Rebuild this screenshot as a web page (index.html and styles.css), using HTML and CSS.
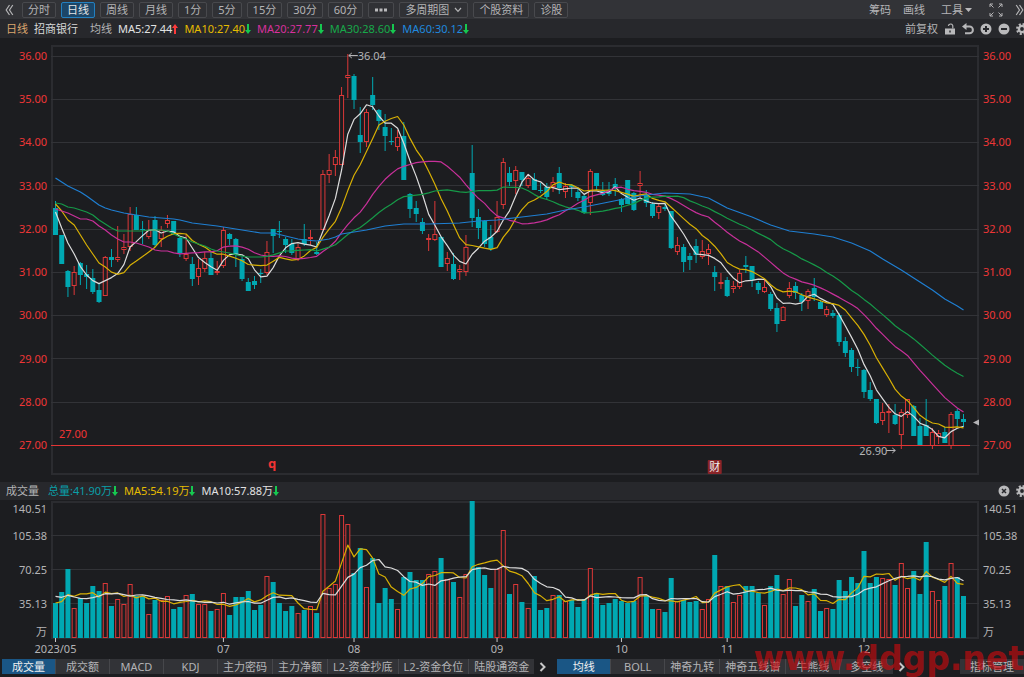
FILE: index.html
```html
<!DOCTYPE html>
<html lang="zh-CN">
<head>
<meta charset="UTF-8">
<meta name="viewport" content="width=device-width, initial-scale=1.0">
<title>招商银行 日线</title>
<link rel="stylesheet" href="styles.css">
</head>
<body>
    <div class="topbar">
        <button class="icon-btn" aria-label="收起"><svg width="9" height="12" viewBox="0 0 9 12"><path d="M4.5 1L1.2 6l3.300 5M7.800 1L4.500 6l3.300 5"/></svg></button>
        <div class="periods">
            <button>分时</button>
            <button class="active">日线</button>
            <button>周线</button>
            <button>月线</button>
            <button>1分</button>
            <button>5分</button>
            <button>15分</button>
            <button>30分</button>
            <button>60分</button>
            <button aria-label="更多"><svg width="14" height="4" viewBox="0 0 14 4"><path class="solid" d="M1 .5h3v3H1zM5.500 .5h3v3h-3zM10 .5h3v3h-3z"/></svg></button>
            <button>多周期图<svg class="chevron" width="8" height="6" viewBox="0 0 8 6"><path d="M1 1l3 3.400L7 1"/></svg></button>
            <button>个股资料</button>
            <button>诊股</button>
        </div>
        <div class="tools">
            <button>筹码</button>
            <button>画线</button>
            <button class="tool-menu">工具<svg width="7" height="4" viewBox="0 0 7 4"><path class="solid" d="M0 0h7L3.500 4z"/></svg></button>
            <button class="full" aria-label="全屏"><svg width="14" height="14" viewBox="0 0 14 14"><path d="M1 4V1h3M1 1l3.500 3.500M10 1h3v3M13 1L9.500 4.500M1 10v3h3M1 13l3.500-3.500M10 13h3v-3M13 13L9.500 9.500"/></svg></button>
            <button aria-label="展开"><svg width="9" height="12" viewBox="0 0 9 12"><path d="M1.200 1l3.300 5-3.300 5M4.500 1l3.300 5-3.300 5"/></svg></button>
        </div>
    </div>

    <div class="infobar">
        <span class="period">日线</span>
        <span class="stock">招商银行</span>
        <span class="group">均线</span>
        <span class="c-white">MA5:27.44<svg class="arrow up" width="6" height="10" viewBox="0 0 6 10"><path d="M3 0l3 4H4v6H2V4H0z"/></svg></span>
        <span class="c-yellow">MA10:27.40<svg class="arrow down" width="6" height="10" viewBox="0 0 6 10"><path d="M3 10L0 6h2V0h2v6h2z"/></svg></span>
        <span class="c-pink">MA20:27.77<svg class="arrow down" width="6" height="10" viewBox="0 0 6 10"><path d="M3 10L0 6h2V0h2v6h2z"/></svg></span>
        <span class="c-green">MA30:28.60<svg class="arrow down" width="6" height="10" viewBox="0 0 6 10"><path d="M3 10L0 6h2V0h2v6h2z"/></svg></span>
        <span class="c-blue">MA60:30.12<svg class="arrow down" width="6" height="10" viewBox="0 0 6 10"><path d="M3 10L0 6h2V0h2v6h2z"/></svg></span>
        <div class="info-tools">
            <button>前复权</button>
            <button aria-label="锁定"><svg width="12" height="12" viewBox="0 0 12 12"><path class="solid" fill-rule="evenodd" d="M1 5.500h10V11.500H1zM5.300 7.500v2h1.400v-2z"/><path d="M8.800 5.500V3.500a2.200 2.200 0 0 0-4.400-.6"/></svg></button>
            <button aria-label="撤销"><svg width="12" height="12" viewBox="0 0 12 12"><path class="thick" d="M2 3.500h5.500a3.300 3.300 0 0 1 0 6.800H3"/><path class="solid" d="M0 3.500L4.500 0v7z"/></svg></button>
            <button aria-label="放大"><svg width="12" height="12" viewBox="0 0 12 12"><circle class="solid" cx="6" cy="6" r="5.500"/><path class="cut" d="M6 3v6M3 6h6"/></svg></button>
            <button aria-label="缩小"><svg width="12" height="12" viewBox="0 0 12 12"><circle class="solid" cx="6" cy="6" r="5.500"/><path class="cut" d="M3 6h6"/></svg></button>
            <button aria-label="设置"><svg width="12" height="12" viewBox="0 0 12 12"><circle class="teeth" cx="6" cy="6" r="4.800"/><circle class="ring" cx="6" cy="6" r="3.100"/></svg></button>
        </div>
    </div>

    <div class="panel">
        <div class="axis price-axis left">
            <span>36.00</span><span>35.00</span><span>34.00</span><span>33.00</span><span>32.00</span>
            <span>31.00</span><span>30.00</span><span>29.00</span><span>28.00</span><span>27.00</span>
        </div>
        <svg id="priceChart" class="chart price-chart"></svg>
        <div class="axis price-axis">
            <span>36.00</span><span>35.00</span><span>34.00</span><span>33.00</span><span>32.00</span>
            <span>31.00</span><span>30.00</span><span>29.00</span><span>28.00</span><span>27.00</span>
        </div>
    </div>

    <div class="infobar volume-bar">
        <span class="group">成交量</span>
        <span class="c-teal">总量:41.90万<svg class="arrow down" width="6" height="10" viewBox="0 0 6 10"><path d="M3 10L0 6h2V0h2v6h2z"/></svg></span>
        <span class="c-yellow">MA5:54.19万<svg class="arrow down" width="6" height="10" viewBox="0 0 6 10"><path d="M3 10L0 6h2V0h2v6h2z"/></svg></span>
        <span class="c-white">MA10:57.88万<svg class="arrow down" width="6" height="10" viewBox="0 0 6 10"><path d="M3 10L0 6h2V0h2v6h2z"/></svg></span>
        <div class="info-tools">
            <button aria-label="关闭"><svg width="12" height="12" viewBox="0 0 12 12"><circle class="solid" cx="6" cy="6" r="5.500"/><path class="cut thin" d="M4 4l4 4M8 4L4 8"/></svg></button>
            <button aria-label="设置"><svg width="12" height="12" viewBox="0 0 12 12"><circle class="teeth" cx="6" cy="6" r="4.800"/><circle class="ring" cx="6" cy="6" r="3.100"/></svg></button>
        </div>
    </div>

    <div class="panel">
        <div class="axis volume-axis left">
            <span>140.51</span><span>105.38</span><span>70.25</span><span>35.13</span><span>万</span>
        </div>
        <svg id="volumeChart" class="chart volume-chart"></svg>
        <div class="axis volume-axis">
            <span>140.51</span><span>105.38</span><span>70.25</span><span>35.13</span><span>万</span>
        </div>
    </div>

    <div class="bottombar">
        <div class="tabs">
            <button class="active">成交量</button>
            <button>成交额</button>
            <button>MACD</button>
            <button>KDJ</button>
            <button>主力密码</button>
            <button>主力净额</button>
            <button>L2-资金抄底</button>
            <button>L2-资金仓位</button>
            <button>陆股通资金</button>
        </div>
        <button class="next" aria-label="更多指标"><svg width="7" height="10" viewBox="0 0 7 10"><path d="M1.500 1L5.500 5l-4 4"/></svg></button>
        <div class="tabs">
            <button class="active">均线</button>
            <button>BOLL</button>
            <button>神奇九转</button>
            <button>神奇五线谱</button>
            <button>牛熊线</button>
            <button>多空线</button>
        </div>
        <button class="next" aria-label="更多均线"><svg width="7" height="10" viewBox="0 0 7 10"><path d="M1.500 1L5.500 5l-4 4"/></svg></button>
        <button class="manage">指标管理</button>
    </div>
    <div class="watermark">www.ddgp.net</div>

    <script src="chart.js"></script>
</body>
</html>
```
FILE: styles.css
```css
body {
    margin: 0;
    background-color: #1c1d20;
    color: #b4b4b6;
    font-family: "Noto Sans", "Noto Sans CJK SC", sans-serif;
    font-size: 11px;
    line-height: 16px;
    position: relative;
    overflow: hidden;
}
button {
    background: none;
    border: none;
    margin: 0;
    padding: 0;
    color: inherit;
    font: inherit;
    cursor: pointer;
    white-space: nowrap;
}
svg {
    display: block;
}
button svg path {
    fill: none;
    stroke: #b4b4b6;
    stroke-width: 1.2;
}
button svg .solid {
    fill: #b9b9bb;
    stroke: none;
}
button svg .thick {
    stroke-width: 2;
}
button svg .cut {
    stroke: #27282c;
    stroke-width: 2;
}
button svg .thin {
    stroke-width: 1.5;
}
button svg .teeth {
    fill: none;
    stroke: #b9b9bb;
    stroke-width: 2.4;
    stroke-dasharray: 2 1.77;
}
button svg .ring {
    fill: none;
    stroke: #b9b9bb;
    stroke-width: 2.4;
}

/* top toolbar */
.topbar {
    display: flex;
    align-items: center;
    height: 19px;
    background-color: #323337;
}
.icon-btn {
    margin: 0 8px 0 5px;
}
.periods {
    display: flex;
    gap: 5px;
}
.periods button {
    display: flex;
    align-items: center;
    box-sizing: border-box;
    height: 16px;
    padding: 0 5px;
    line-height: 14px;
    border: 1px solid #48494d;
    border-radius: 2px;
    background-color: #303135;
}
.periods .active {
    background-color: #1c4668;
    border-color: #2380c0;
    color: #e4e4e4;
}
.chevron {
    margin: 0 0 0 5px;
}
.tools {
    display: flex;
    align-items: center;
    gap: 12px;
    margin-left: auto;
}
.tool-menu {
    display: flex;
    align-items: center;
    gap: 2px;
    margin-left: 4px;
}
.full {
    margin-left: 5px;
}
.full svg path {
    stroke-width: 1;
}

/* indicator values */
.infobar {
    display: flex;
    align-items: center;
    gap: 6px;
    height: 19px;
    padding-left: 6px;
    background-color: #27282c;
}
.infobar span {
    display: flex;
    align-items: center;
    white-space: nowrap;
}
.period {
    color: #dba66e;
}
.stock {
    margin-right: 6px;
    color: #d8d8d8;
}
.c-white {
    color: #e2e2e2;
}
.c-yellow {
    color: #e6bc00;
}
.c-pink {
    color: #d8309c;
}
.c-green {
    color: #17a84a;
}
.c-blue {
    color: #2088de;
}
.c-teal {
    color: #0a9fa8;
}
.arrow.up {
    fill: #ff3b3b;
}
.arrow.down {
    fill: #16c850;
}
.info-tools {
    display: flex;
    align-items: center;
    gap: 6px;
    margin-left: auto;
    margin-right: -4px;
}
.volume-bar {
    height: 18px;
}
.volume-bar .group {
    margin-right: 3px;
}

/* charts */
.panel {
    display: flex;
}
.axis {
    box-sizing: border-box;
    width: 45px;
    padding-left: 4px;
}
.axis.left {
    width: 51px;
    padding: 0 4px 0 0;
    text-align: right;
}
.price-axis {
    display: flex;
    flex-direction: column;
    justify-content: space-between;
    height: 405px;
    margin-top: 10px;
    color: #ee3636;
}
.volume-axis {
    display: grid;
    grid-template-rows: 17px 27px 34px 34px 28px;
    align-items: end;
    align-content: start;
}
.chart {
    flex: 1;
    min-width: 0;
    overflow: visible;
}
.price-chart {
    height: 444px;
}
.volume-chart {
    height: 157px;
}
.frame {
    fill: none;
    stroke: #2b2c30;
    stroke-width: 2;
}
.grid {
    stroke: #323337;
}
.bar-up {
    fill: #1c1d20;
    stroke: #dc3838;
}
.bar-down {
    fill: #00a8b2;
}
.wick-up {
    stroke: #dc3838;
}
.wick-down {
    stroke: #00a8b2;
}
.line {
    fill: none;
    stroke-width: 1.2;
    stroke-linejoin: round;
}
.line.white {
    stroke: #dcdcdc;
}
.line.yellow {
    stroke: #d8b004;
}
.line.pink {
    stroke: #c8309a;
}
.line.green {
    stroke: #169a48;
}
.line.blue {
    stroke: #1f7fd2;
}
.support {
    stroke: #e23434;
}
.tick {
    stroke: #c8c8c8;
}
.label {
    fill: #b4b4b6;
}
.label.red {
    fill: #f03434;
}
.label.middle {
    text-anchor: middle;
}
.label.bold {
    font-size: 13px;
    font-weight: bold;
}
.badge {
    fill: #8a2428;
}
.badge-text {
    fill: #f0f0f0;
    font-size: 11px;
    text-anchor: middle;
}
.pointer {
    fill: #b4b4b6;
}
.pointer-line {
    fill: none;
    stroke: #b4b4b6;
}

/* bottom tabs */
.bottombar {
    display: flex;
    align-items: center;
    height: 19px;
    padding: 0 0 1px 2px;
}
.tabs {
    display: flex;
    gap: 1px;
    background-color: #46474b;
}
.tabs button,
.manage {
    box-sizing: border-box;
    min-width: 53px;
    height: 15px;
    padding: 0 5px;
    line-height: 15px;
    background-color: #323337;
}
.tabs .active {
    background-color: #1a5685;
    color: #f0f0f0;
}
.next {
    margin: 0 11px 0 5px;
}
.next svg path {
    stroke: #c8c8c8;
    stroke-width: 2;
}
.manage {
    margin-left: auto;
    padding: 0 10px;
}
.watermark {
    position: absolute;
    right: 0;
    bottom: -1px;
    color: rgba(205, 10, 14, 0.65);
    font: bold 33px/38px "DejaVu Sans", sans-serif;
    pointer-events: none;
}
```
FILE: chart.js
```js
// up(1)/down(0), high, body top, body bottom, low, volume
const candles = [
    [0,201,208,235,235,105],[0,235,235,264,264,139],[0,270,271,287,297,208],[1,266,272,286,295,90],[0,262,263,275,285,120],
    [0,265,274,277,289,105],[0,269,278,292,294,157],[0,284,290,302,303,142],[1,256,257,296,296,165],[0,249,257,260,267,96],
    [1,226,257,260,262,117],[1,234,247,250,254,102],[1,207,214,247,251,162],[0,207,215,230,230,125],[0,221,229,230,244,125],
    [1,220,230,237,239,72],[0,216,220,245,247,115],[1,226,230,239,247,113],[1,215,220,224,228,127],[0,221,221,234,235,86],
    [0,237,238,253,257,93],[1,234,254,259,261,128],[0,257,264,279,286,131],[1,259,268,277,285,103],[1,252,258,269,272,101],
    [0,252,258,275,275,81],[1,261,271,273,275,87],[1,227,230,266,268,135],[0,233,234,239,245,70],[0,238,239,255,267,123],
    [0,257,259,279,281,123],[0,278,282,291,291,142],[0,276,281,285,289,83],[0,269,273,274,283,100],[1,241,252,273,275,186],
    [0,229,229,236,253,168],[0,221,231,232,238,105],[0,237,239,245,253,81],[0,239,244,253,255,96],[1,244,247,259,261,75],
    [0,224,239,244,246,83],[1,230,237,238,245,96],[0,242,252,254,255,75],[1,170,174,230,230,372],[1,154,170,175,183,150],
    [1,150,157,165,176,162],[1,87,95,165,165,368],[1,54,75,78,98,342],[0,74,76,100,109,195],[0,107,135,142,153,269],
    [1,109,112,142,147,152],[0,77,95,105,110,240],[0,109,110,121,130,104],[0,114,127,136,151,150],[0,128,141,142,145,117],
    [1,130,137,147,151,87],[0,122,136,180,180,183],[0,193,194,209,218,198],[0,201,208,214,222,174],[0,218,222,231,234,174],
    [1,234,238,239,251,192],[1,201,234,240,241,200],[0,236,237,267,267,240],[1,252,258,264,271,177],[0,253,264,279,280,168],
    [1,265,269,272,280,123],[1,235,247,272,276,192],[0,145,173,218,227,410],[0,209,217,228,239,212],[0,220,221,244,247,189],
    [0,225,237,249,251,150],[1,201,217,232,233,207],[1,158,162,205,209,324],[0,167,173,182,186,133],[1,166,170,181,194,162],
    [0,172,172,180,186,108],[1,174,178,186,188,90],[0,173,179,190,190,186],[0,183,190,191,193,85],[0,183,187,197,200,91],
    [1,177,182,187,192,129],[0,167,173,188,194,129],[1,183,186,192,198,110],[0,184,185,187,197,113],[0,187,192,198,201,94],
    [0,195,196,213,214,117],[1,169,171,203,215,210],[0,173,173,186,190,135],[0,182,191,195,196,98],[0,182,190,194,196,106],
    [0,178,184,188,196,118],[0,198,199,205,212,110],[0,180,180,204,204,105],[0,192,193,210,211,111],[1,171,183,186,198,183],
    [0,190,195,203,207,125],[0,202,204,216,218,88],[1,203,206,213,219,87],[0,203,207,209,211,78],[0,211,211,248,249,179],
    [1,237,245,252,255,110],[0,244,247,262,272,113],[0,253,256,260,270,109],[0,239,246,255,263,112],[1,240,251,257,259,87],
    [1,244,249,254,265,117],[0,266,272,277,291,249],[1,273,282,284,289,156],[0,277,280,296,297,157],[1,281,286,289,293,108],
    [1,270,273,287,289,129],[0,256,265,267,273,155],[0,266,266,280,287,155],[0,281,283,290,294,135],[1,280,287,292,293,98],
    [0,292,294,309,311,155],[0,303,308,324,332,189],[1,306,307,321,321,132],[1,282,288,296,298,178],[0,282,286,293,299,96],
    [0,293,295,302,311,130],[1,289,291,301,309,111],[0,278,288,297,301,147],[0,300,302,309,309,82],[1,306,309,315,317,90],
    [0,310,313,316,318,88],[0,313,315,342,346,174],[0,337,341,353,357,141],[0,348,350,367,372,184],[0,359,367,368,376,165],
    [0,369,370,392,398,262],[0,382,390,399,401,165],[0,399,399,423,424,184],[1,403,412,421,425,180],[1,404,411,412,433,177],
    [0,404,415,424,425,159],[1,409,412,435,449,224],[1,399,399,415,418,150],[0,405,406,436,436,201],[0,418,426,445,445,133],
    [0,399,425,436,436,289],[1,428,432,446,449,141],[1,430,433,437,444,114],[0,427,432,443,443,157],[1,412,414,446,449,224],
    [0,409,411,419,427,183],[0,414,419,422,427,126]
];

// averages that reach back before the first candle
const ma5Start = [212,228,243,254];
const ma10Start = [204,211,220,225,235,245,254,263,267];
const ma20Start = [209,211,213,216,219,219,221,226,230,235,239,242,242,243,245,247,250,251,251];
const ma30Start = [203,204,207,208,210,212,215,220,224,228,231,231,231,231,231,230,230,230,231,234,237,239,242,244,246,249,251,252,253];
const ma60 = [
    [0,178],[2,186],[4,192],[5,196],[7,205],[8,208],[9,210],[11,213],[12,214],[15,217],[17,218],[19,219],[20,220],[22,223],
    [26,226],[28,228],[31,231],[33,233],[35,233],[37,236],[39,239],[40,240],[42,241],[43,240],[44,239],[45,237],[46,234],
    [48,232],[50,230],[53,226],[56,224],[60,224],[65,223],[68,221],[71,220],[75,217],[79,214],[82,210],[85,207],[89,202],
    [93,197],[95,195],[98,193],[102,194],[105,198],[108,208],[112,217],[115,225],[118,231],[122,234],[125,237],[128,243],
    [131,251],[133,259],[136,270],[138,278],[141,290],[143,299],[145,306],[146,310]
];
const vol5Start = [105,109,130,125];
const vol10Start = [125,122,128,123,119,118,121,126,133];
const months = [[0,'2023/05'],[27,'07'],[48,'08'],[71,'09'],[91,'10'],[108,'11'],[130,'12']];

function average(values, size, start) {
    return values.map((value, i) => {
        if (i < size - 1) return [i, start[i]];
        let sum = 0;
        for (let k = i - size + 1; k <= i; k++) sum += values[k];
        return [i, sum / size];
    });
}

function draw() {
    const priceChart = document.getElementById('priceChart');
    const volumeChart = document.getElementById('volumeChart');
    const width = priceChart.getBoundingClientRect().width;
    const step = (width - 20) / (candles.length - 1);
    const x = i => 4.5 + i * step;
    const volY = v => 638 - v / 3;
    const line = (points, color, y = v => v) =>
        `<polyline class="line ${color}" points="${points.map(p => x(p[0]).toFixed(1) + ',' + y(p[1]).toFixed(1)).join(' ')}"/>`;

    // price
    let out = `<rect class="frame" x="1" y="46" width="${width - 2}" height="428"/>`;
    for (let i = 0; i < 10; i++) {
        const y = Math.floor(56 + i * 43.25) + 0.5;
        out += `<line class="grid" x1="0" x2="${width}" y1="${y}" y2="${y}"/>`;
    }
    candles.forEach(([up, high, top, bottom, low], i) => {
        const type = up ? 'up' : 'down';
        const cx = x(i);
        out += `<line class="wick-${type}" x1="${cx}" x2="${cx}" y1="${high}" y2="${low}"/>`;
        out += up
            ? `<rect class="bar-up" x="${cx - 2}" y="${top + 0.5}" width="4" height="${Math.max(bottom - top - 1, 1)}"/>`
            : `<rect class="bar-down" x="${cx - 2.5}" y="${top}" width="5" height="${bottom - top}"/>`;
    });
    const closes = candles.map(c => c[0] ? c[2] : c[3]);
    out += line(average(closes, 5, ma5Start), 'white');
    out += line(average(closes, 10, ma10Start), 'yellow');
    out += line(average(closes, 20, ma20Start), 'pink');
    out += line(average(closes, 30, ma30Start), 'green');
    out += line(ma60, 'blue');
    out += `<line class="support" x1="0" x2="${width - 9}" y1="445.5" y2="445.5"/>`;
    out += `<text class="label red" x="8" y="438">27.00</text>`;

    const peak = x(47);
    out += `<path class="pointer-line" d="M${peak + 1} 55.5h9M${peak + 4} 53l-3 2.500l3 2.500"/>`;
    out += `<text class="label" x="${peak + 10}" y="60">36.04</text>`;
    const bottom = x(136);
    out += `<path class="pointer-line" d="M${bottom - 15} 450.500h9M${bottom - 9} 448l3 2.500l-3 2.500"/>`;
    out += `<text class="label" x="${bottom - 42}" y="455">26.90</text>`;
    out += `<text class="label red middle bold" x="${x(35) - 1}" y="468">q</text>`;
    out += `<rect class="badge" x="${x(106) - 7}" y="460" width="14" height="14" rx="1"/>`;
    out += `<text class="badge-text" x="${x(106)}" y="471">财</text>`;
    out += `<path class="pointer" d="M${width - 6} 422.500l6-3v6z"/>`;
    priceChart.setAttribute('viewBox', `0 38 ${width} 444`);
    priceChart.innerHTML = out;

    // volume
    out = `<rect class="frame" x="1" y="502" width="${width - 2}" height="136"/>`;
    [535.5, 569.5, 603.5].forEach(y => {
        out += `<line class="grid" x1="0" x2="${width}" y1="${y}" y2="${y}"/>`;
    });
    candles.forEach((c, i) => {
        const top = Math.round(volY(c[5]));
        out += c[0]
            ? `<rect class="bar-up" x="${x(i) - 2}" y="${top + 0.5}" width="4" height="${637 - top}"/>`
            : `<rect class="bar-down" x="${x(i) - 2.5}" y="${top}" width="5" height="${638 - top}"/>`;
    });
    const volumes = candles.map(c => c[5]);
    out += line(average(volumes, 5, vol5Start), 'yellow', volY);
    out += line(average(volumes, 10, vol10Start), 'white', volY);
    months.forEach(([i, text]) => {
        out += `<line class="tick" x1="${x(i)}" x2="${x(i)}" y1="638" y2="642"/>`;
        out += `<text class="label middle" x="${x(i)}" y="653">${text}</text>`;
    });
    volumeChart.setAttribute('viewBox', `0 500 ${width} 157`);
    volumeChart.innerHTML = out;
}

draw();
window.addEventListener('resize', draw);
```
